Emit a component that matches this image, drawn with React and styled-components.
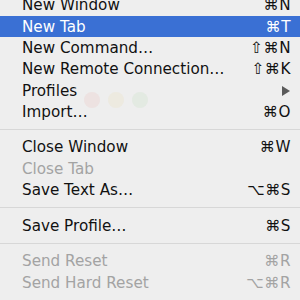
import React from 'react';
import styled, { createGlobalStyle } from 'styled-components';

const GlobalStyle = createGlobalStyle`
  html, body {
    margin: 0;
    padding: 0;
    background: #ededed;
  }
`;

const Desktop = styled.div`
  position: relative;
  width: 300px;
  height: 300px;
  overflow: hidden;
  background: #eeeeee;
  font-family: "DejaVu Sans", "Liberation Sans", sans-serif;
`;

const Backdrop = styled.div`
  position: absolute;
  top: 92px;
  left: 84px;
  display: flex;
  gap: 8px;
  pointer-events: none;
`;

const Light = styled.span`
  width: 16px;
  height: 16px;
  border-radius: 50%;
  background: ${p => p.color};
  opacity: 0.07;
`;

const Menu = styled.div`
  position: relative;
  margin-top: -5.3px;
  display: flex;
  flex-direction: column;
`;

const Row = styled.div`
  display: flex;
  align-items: center;
  justify-content: space-between;
  height: 21.3px;
  padding: 0 9px 0 22px;
  font-size: 15.2px;
  color: ${p => (p.$active ? '#ffffff' : p.$disabled ? '#a3a3a3' : '#111111')};
  background: ${p => (p.$active ? '#3a70d4' : 'transparent')};
  white-space: nowrap;
`;

const Keys = styled.span`
  letter-spacing: 0.5px;
`;

const Arrow = styled.span`
  width: 0;
  height: 0;
  margin-right: 1px;
  border-top: 5px solid transparent;
  border-bottom: 5px solid transparent;
  border-left: 8px solid #5a5a5a;
`;

const Separator = styled.div`
  height: 14.3px;
  display: flex;
  align-items: center;

  &::after {
    content: '';
    flex: 1;
    height: 1px;
    background: #d7d7d7;
  }
`;

const items = [
  { label: 'New Window', keys: '⌘N' },
  { label: 'New Tab', keys: '⌘T', active: true },
  { label: 'New Command…', keys: '⇧⌘N' },
  { label: 'New Remote Connection…', keys: '⇧⌘K' },
  { label: 'Profiles', submenu: true },
  { label: 'Import…', keys: '⌘O' },
  { sep: true },
  { label: 'Close Window', keys: '⌘W' },
  { label: 'Close Tab', disabled: true },
  { label: 'Save Text As…', keys: '⌥⌘S' },
  { sep: true },
  { label: 'Save Profile…', keys: '⌘S' },
  { sep: true },
  { label: 'Send Reset', keys: '⌘R', disabled: true },
  { label: 'Send Hard Reset', keys: '⌥⌘R', disabled: true },
];

export default function App() {
  return (
    <>
      <GlobalStyle />
      <Desktop>
        <Backdrop>
          <Light color="#e0443a" />
          <Light color="#e6b52c" />
          <Light color="#5cb845" />
        </Backdrop>
        <Menu>
          {items.map((it, i) =>
            it.sep ? (
              <Separator key={i} />
            ) : (
              <Row key={i} $active={it.active} $disabled={it.disabled}>
                <span>{it.label}</span>
                {it.submenu ? <Arrow /> : it.keys ? <Keys>{it.keys}</Keys> : null}
              </Row>
            )
          )}
        </Menu>
      </Desktop>
    </>
  );
}
